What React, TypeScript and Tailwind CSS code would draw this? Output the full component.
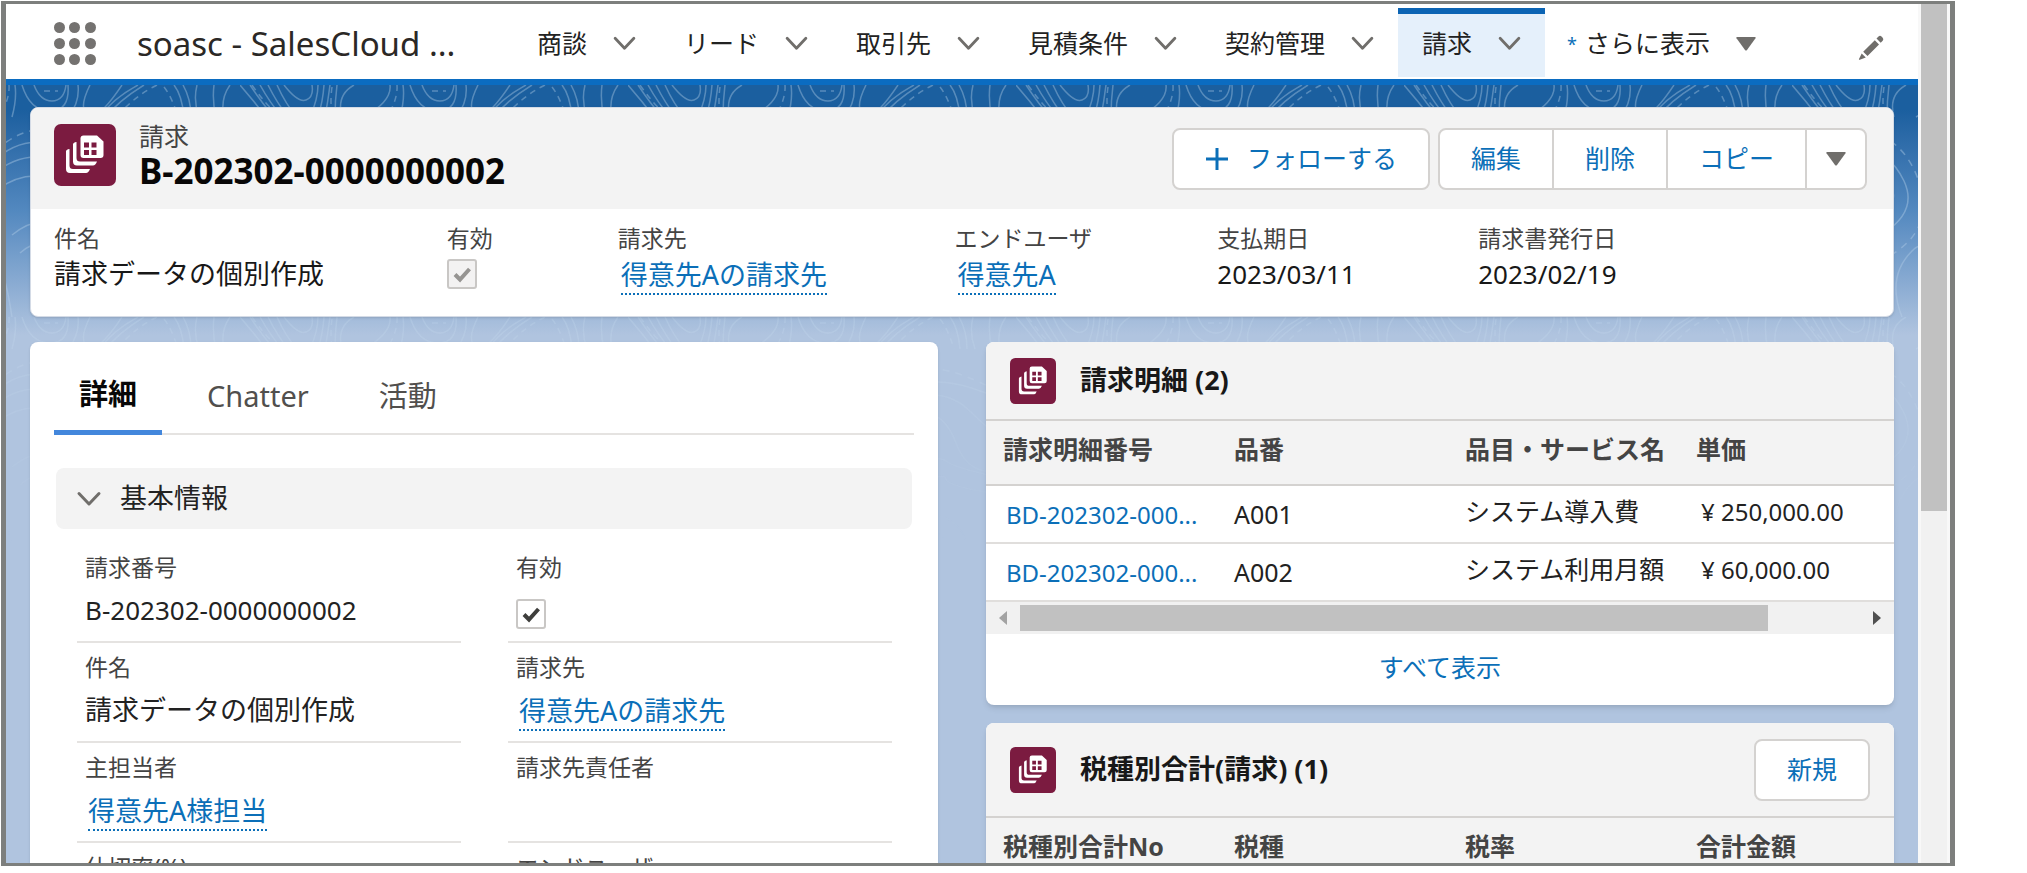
import React, { useState } from "react";

const navItems = ["商談", "リード", "取引先", "見積条件", "契約管理", "請求"];
const tabs = ["詳細", "Chatter", "活動"];

const lineItems = [
  { no: "BD-202302-000...", code: "A001", name: "システム導入費", price: "¥ 250,000.00" },
  { no: "BD-202302-000...", code: "A002", name: "システム利用月額", price: "¥ 60,000.00" },
];

function Chevron({ className = "" }: { className?: string }) {
  return (
    <svg viewBox="0 0 24 16" fill="none" stroke="#706e6b" strokeWidth="3" strokeLinecap="round" strokeLinejoin="round" className={className} aria-hidden>
      <path d="M2 2.5 12 13 22 2.5" />
    </svg>
  );
}

function Caret() {
  return (
    <svg viewBox="0 0 20 14" className="h-[14px] w-5 shrink-0" fill="#706e6b" aria-hidden>
      <path d="M1 0h18q1.2 0 .5 1.2L11 13q-1 1.2-2 0L.5 1.2Q-.2 0 1 0Z" />
    </svg>
  );
}

function RecordIcon({ className }: { className: string }) {
  return (
    <svg viewBox="0 0 62 62" className={className} aria-hidden>
      <rect width="62" height="62" rx="7" fill="#7b1b40" />
      <g fill="#fff">
        <path d="M19 20.500q0-2 3.500-2.500V34q0 3.500 3.500 3.500H43q-1.500 4-4 4H23q-4 0-4-4Z" />
        <path d="M12 27.500q0-2 3.500-2.500V41.500q0 3.500 3.500 3.500H36q-1.500 4-4 4H16q-4 0-4-4Z" />
        <path d="M29.500 11.500H43l6.500 6V31q0 3-3 3h-17q-3 0-3-3V14.500q0-3 3-3Z" />
      </g>
      <path d="M30 18.500h5V23.500H30ZM37.500 18.500h5V23.500H37.500ZM30 26h5v5H30ZM37.500 26h5v5H37.500Z" fill="#7b1b40" />
    </svg>
  );
}

function Contours() {
  return (
    <svg className="absolute inset-0 h-[460px] w-full" aria-hidden>
      <defs>
        <pattern id="contours" width="388" height="232" x="234" patternUnits="userSpaceOnUse">
          <g fill="none" stroke="#cfe3f5" strokeOpacity="0.34" strokeWidth="1.5">
            <path d="M0 0q14 16 26 32M10 0q12 18 24 32M20 0q10 18 22 32M28 0q9 18 20 32M37 0q9 20 20 32" />
            <path d="M44 0q14 18 22 15T72 0M78 0q0 14-8 32M84 0q-1 16-6 32M90 0q-2 16-5 32" />
            <path d="M97 0q-2 16-2 32M114 0q-18 10-12 32M150 0q2 16-26 32" />
            <path d="M163 0q2 14-3 32M170 0q8 26 28 26T216 0M182 0q6 16 18 16t14-16" />
            <path d="M226 0q2 18-10 32M238 0q-12 24-2 30t34-30M286 0q-26 14-38 32M292 0q-26 16-38 32" />
            <path d="M322 0q8 10 10 32M331 0q8 14 8 32M345 0q-4 16 2 32M362 0q-2 16 2 32M378 0q-10 14-6 32" />
            <path strokeDasharray="6 5" d="M12 0q14 20 28 32M157 0q1 14-10 32M305 0q-24 12-40 32M312 2q8 10 14 30M92 2q-2 14 0 28M192 6h14" />
            <path d="M0 66q22-24 60-12t52 42-20 52-70 6T0 110ZM14 74q22-18 44-6t38 30-14 36-52 0-16-30ZM28 84q16-10 28-2t24 22-10 18-32-4-10-18Z" />
            <path d="M140 78q34-34 78-12t66 6 74 4 30 40M140 90q36-30 74-10t70 4 60 12 44 30M146 104q34-24 66-4t66 2 50 24 60 22" />
            <path d="M160 150q32-26 58 0t58 6 42-12 70 20M168 168q26-22 44 0t62 4 44-10 70 18M110 232q-16-40 10-66t40 66" />
            <path d="M240 232q-8-26 18-34t52 0 30 34M254 232q-4-16 16-22t34 2 20 20M0 200q28-22 56 0t40 32M0 214q24-18 44-2t30 20" />
            <path strokeDasharray="7 6" d="M0 56q22-18 66-12t60 50-18 70-88 4M144 66q34-34 80-14t66 4 98 28" />
            <path d="M206 206l-18 26M214 204l-18 28M222 203l-16 29M228 200l-14 32M234 200l-12 32" />
          </g>
        </pattern>
        <linearGradient id="fade" x1="0" y1="0" x2="0" y2="1">
          <stop offset="0.25" stopColor="#fff" />
          <stop offset="1" stopColor="#000" />
        </linearGradient>
        <mask id="fadeMask">
          <rect width="100%" height="100%" fill="url(#fade)" />
        </mask>
      </defs>
      <rect width="100%" height="100%" fill="url(#contours)" mask="url(#fadeMask)" />
    </svg>
  );
}

function CheckBox({ label, id, disabled = false }: { label: string; id: string; disabled?: boolean }) {
  return (
    <span className="relative inline-flex h-[30px] w-[30px]">
      <input
        id={id}
        type="checkbox"
        aria-label={label}
        checked
        readOnly
        disabled={disabled}
        className="h-[30px] w-[30px] appearance-none rounded-[3px] border-2 border-[#c9c7c5] bg-white disabled:bg-[#f3f2f2]"
      />
      <svg viewBox="0 0 30 30" className="pointer-events-none absolute inset-0" fill="none" stroke={disabled ? "#969492" : "#3e3e3c"} strokeWidth="4" aria-hidden>
        <path d="M8 15.500l5 5L22.500 10" />
      </svg>
    </span>
  );
}

function RecordLink({ children }: { children: React.ReactNode }) {
  return (
    <a href="#" className="mt-1 ml-[3px] inline-block border-b-2 border-dotted border-[#0b6fb8] text-[27px] leading-[36px] text-[#0b6fb8]">
      {children}
    </a>
  );
}

function Highlight({ label, children }: { label: string; children: React.ReactNode }) {
  return (
    <div>
      <div className="text-[23px] leading-[30px] text-[#444]">{label}</div>
      <div className="flex h-[42px] items-center whitespace-nowrap">{children}</div>
    </div>
  );
}

function Field({ label, children }: { label: string; children?: React.ReactNode }) {
  return (
    <div className="h-[100px] border-b-2 border-[#e5e3e1] pl-2">
      <div className="pt-2 text-[23px] leading-[32px] text-[#444]">{label}</div>
      <div className="flex h-[54px] items-center whitespace-nowrap text-[#222]">{children}</div>
    </div>
  );
}

function HeaderRow({ labels }: { labels: string[] }) {
  return (
    <thead>
      <tr className="h-[65px] border-y-2 border-[#d4d2d0] bg-[#f3f3f3] text-left text-[25px] whitespace-nowrap text-[#444]">
        {labels.map((l, i) => (
          <th key={l} scope="col" className={i < 3 ? "w-[231px] pb-1.5 pl-[17px] font-bold" : "pb-1.5 pl-[17px] font-bold"}>
            {l}
          </th>
        ))}
      </tr>
    </thead>
  );
}

export default function App() {
  const [tab, setTab] = useState("詳細");

  return (
    <div className="h-screen overflow-hidden bg-white pt-px pr-[72px] pb-[7px] pl-px font-['Noto_Sans','Noto_Sans_CJK_JP',sans-serif] text-[#181818]">
      <div className="flex h-full overflow-hidden border-x-[5px] border-y-[3px] border-[#7d7f7d]">
        <div className="flex min-w-0 flex-1 flex-col">
          <header className="flex h-[81px] shrink-0 items-stretch border-b-[6px] border-[#0b6cc1] bg-white">
            <button type="button" aria-label="アプリケーションランチャー" className="ml-12 grid w-[41px] shrink-0 grid-cols-3 content-center gap-x-[5px] gap-y-[5px] pt-1">
              {Array.from({ length: 9 }, (_, i) => (
                <span key={i} className="h-[11px] w-[11px] rounded-full bg-[#747270]" />
              ))}
            </button>
            <span className="ml-[42px] w-[376px] shrink-0 self-center pt-1 text-[33px] whitespace-nowrap text-[#2b2826]">soasc - SalesCloud ...</span>
            <nav className="flex min-w-0 flex-1">
              {navItems.map((item) => {
                const active = item === "請求";
                return (
                  <div
                    key={item}
                    className={
                      active
                        ? "mt-1 mb-0.5 flex items-center gap-[26px] border-t-[6px] border-[#0b64b4] bg-[#e5f0fb] px-6 pb-1"
                        : "flex items-center gap-[26px] px-6 pt-1"
                    }
                  >
                    <a href="#" className="text-[25px] whitespace-nowrap text-[#222]">{item}</a>
                    <button type="button" aria-label={`${item}のメニュー`}>
                      <Chevron className="h-[15px] w-[23px]" />
                    </button>
                  </div>
                );
              })}
              <button type="button" className="ml-[22px] flex items-center gap-2 pt-1 text-[25px] whitespace-nowrap text-[#222]">
                <span className="text-lg text-[#0b6fb8]">*</span>
                さらに表示
                <span className="ml-[18px]"><Caret /></span>
              </button>
              <button type="button" aria-label="ナビゲーションを編集" className="mr-[34px] ml-auto shrink-0 pt-3">
                <svg viewBox="0 0 26 26" className="h-[26px] w-[26px]" fill="#706e6b" aria-hidden>
                  <path d="M18.500 3.500 20.500 1.500q1.500-1.300 3 0l1.200 1.200q1.300 1.500 0 3l-2 2ZM16.800 5.200 21 9.400 9.500 21 5.200 16.800ZM3.700 18.400 7.800 22.500 1.800 24.800q-1.200.3-.8-.9Z" />
                </svg>
              </button>
            </nav>
          </header>

          <main className="relative min-h-0 flex-1 overflow-hidden bg-[#b0c4df]">
            <div className="absolute inset-x-0 top-0 h-[250px] bg-linear-to-b from-[#1b5f9f] from-10% via-[#5288bf] via-50% to-[#b0c4df]" />
            <Contours />
            <div className="relative px-6 pt-[22px]">
              <section className="overflow-hidden rounded-lg border border-[#d4dbe6] bg-white shadow">
                <div className="flex h-[101px] items-center bg-[#f3f3f3] pr-[26px] pl-[23px]">
                  <RecordIcon className="mb-2 h-[62px] w-[62px]" />
                  <div className="ml-[23px]">
                    <div className="text-[25px] leading-[30px] text-[#444]">請求</div>
                    <h1 className="mb-1.5 text-[35px] leading-[40px] font-bold text-[#080707]">B-202302-0000000002</h1>
                  </div>
                  <button type="button" className="ml-auto flex h-[62px] w-[258px] items-center justify-center gap-[18px] rounded-lg border-2 border-[#d4d2d0] bg-white text-[25px] text-[#0b6fb8]">
                    <svg viewBox="0 0 24 24" className="h-6 w-6" stroke="currentColor" strokeWidth="3" aria-hidden>
                      <path d="M12 1v22M1 12h22" />
                    </svg>
                    フォローする
                  </button>
                  <div className="ml-2 flex h-[62px] divide-x-2 divide-[#d4d2d0] rounded-lg border-2 border-[#d4d2d0] bg-white text-[25px] text-[#0b6fb8]">
                    <button type="button" className="w-[114px]">編集</button>
                    <button type="button" className="w-[114px]">削除</button>
                    <button type="button" className="w-[139px]">コピー</button>
                    <button type="button" aria-label="その他のアクション" className="flex w-[58px] items-center justify-center">
                      <Caret />
                    </button>
                  </div>
                </div>
                <div className="grid h-[107px] grid-cols-[393fr_171fr_337fr_263fr_261fr_415fr] pt-3.5 pl-[23px]">
                  <Highlight label="件名"><span className="text-[27px]">請求データの個別作成</span></Highlight>
                  <Highlight label="有効"><CheckBox id="head-active" label="有効" disabled /></Highlight>
                  <Highlight label="請求先"><RecordLink>得意先Aの請求先</RecordLink></Highlight>
                  <Highlight label="エンドユーザ"><RecordLink>得意先A</RecordLink></Highlight>
                  <Highlight label="支払期日"><span className="text-[26px]">2023/03/11</span></Highlight>
                  <Highlight label="請求書発行日"><span className="text-[26px]">2023/02/19</span></Highlight>
                </div>
              </section>

              <div className="mt-[25px] grid grid-cols-2 items-start gap-12">
                <section className="h-[600px] rounded-lg bg-white px-6 shadow">
                  <div role="tablist" className="flex h-[93px] items-stretch border-b-2 border-[#e5e3e1] pt-4">
                    {tabs.map((t) => (
                      <button
                        key={t}
                        type="button"
                        role="tab"
                        aria-selected={t === tab}
                        onClick={() => setTab(t)}
                        className={
                          t === tab
                            ? "-mb-0.5 mr-5 border-b-[5px] border-[#4387dc] px-[25px] text-[29px] font-bold text-[#080707]"
                            : "mr-5 px-[25px] text-[29px] text-[#514f4d]"
                        }
                      >
                        {t}
                      </button>
                    ))}
                  </div>
                  <div className="mt-[33px] px-0.5">
                    <button type="button" className="flex h-[61px] w-full items-center gap-[18px] rounded-lg bg-[#f3f3f3] px-5 text-[27px] text-[#222]">
                      <Chevron className="h-4 w-[26px]" />
                      基本情報
                    </button>
                  </div>
                  <div className="mr-[22px] ml-[23px] grid grid-cols-2 gap-x-[47px] pt-3.5">
                    <Field label="請求番号"><span className="text-[26px]">B-202302-0000000002</span></Field>
                    <Field label="有効">
                      <div className="flex h-full items-end pb-2"><CheckBox id="detail-active" label="有効" /></div>
                    </Field>
                    <Field label="件名"><span className="text-[27px]">請求データの個別作成</span></Field>
                    <Field label="請求先"><RecordLink>得意先Aの請求先</RecordLink></Field>
                    <Field label="主担当者"><RecordLink>得意先A様担当</RecordLink></Field>
                    <Field label="請求先責任者" />
                    <Field label="仕切率(%)" />
                    <Field label="エンドユーザ" />
                  </div>
                </section>

                <div className="flex flex-col gap-[18px]">
                  <section className="overflow-hidden rounded-lg bg-white shadow-md">
                    <div className="flex h-[77px] items-center bg-[#f3f3f3] pl-6">
                      <RecordIcon className="h-[46px] w-[46px]" />
                      <h2 className="ml-6 text-[27px] font-bold">請求明細 (2)</h2>
                    </div>
                    <table className="w-full table-fixed border-collapse">
                      <HeaderRow labels={["請求明細番号", "品番", "品目・サービス名", "単価"]} />
                      <tbody>
                        {lineItems.map((row) => (
                          <tr key={row.code} className="h-[58px] border-b-2 border-[#e0dedc] text-[25px] whitespace-nowrap text-[#222]">
                            <td className="pt-0.5 pl-5 text-2xl">
                              <a href="#" className="text-[#0b6fb8]">{row.no}</a>
                            </td>
                            <td className="pt-0.5 pl-[17px]">{row.code}</td>
                            <td className="pb-1 pl-[17px]">{row.name}</td>
                            <td className="pb-1 pl-[22px] text-2xl">{row.price}</td>
                          </tr>
                        ))}
                      </tbody>
                    </table>
                    <div className="flex h-8 items-center bg-[#f1f1f1]">
                      <button type="button" aria-label="左へスクロール" className="flex w-[34px] justify-center">
                        <svg viewBox="0 0 8 14" className="h-3.5 w-2" fill="#a3a3a3" aria-hidden><path d="M8 0v14L0 7Z" /></svg>
                      </button>
                      <div className="flex-1">
                        <div className="h-[26px] w-[89%] bg-[#c1c1c1]" />
                      </div>
                      <button type="button" aria-label="右へスクロール" className="flex w-[34px] justify-center">
                        <svg viewBox="0 0 8 14" className="h-3.5 w-2" fill="#505050" aria-hidden><path d="M0 0v14l8-7Z" /></svg>
                      </button>
                    </div>
                    <a href="#" className="flex h-[71px] items-center justify-center pb-1 text-[25px] text-[#0b6fb8]">すべて表示</a>
                  </section>

                  <section className="overflow-hidden rounded-lg bg-white shadow-md">
                    <div className="flex h-[93px] items-center bg-[#f3f3f3] pr-6 pl-6">
                      <RecordIcon className="h-[46px] w-[46px]" />
                      <h2 className="ml-6 text-[27px] font-bold">税種別合計(請求) (1)</h2>
                      <button type="button" className="ml-auto h-[62px] w-[116px] rounded-lg border-2 border-[#d4d2d0] bg-white text-[25px] text-[#0b6fb8]">新規</button>
                    </div>
                    <table className="w-full table-fixed border-collapse">
                      <HeaderRow labels={["税種別合計No", "税種", "税率", "合計金額"]} />
                    </table>
                  </section>
                </div>
              </div>
            </div>
          </main>
        </div>

        <div className="w-8 shrink-0 border-x-[3px] border-[#f8f8f8] bg-[#f1f1f1]">
          <div className="h-[59%] bg-[#c1c1c1]" />
        </div>
      </div>
    </div>
  );
}
